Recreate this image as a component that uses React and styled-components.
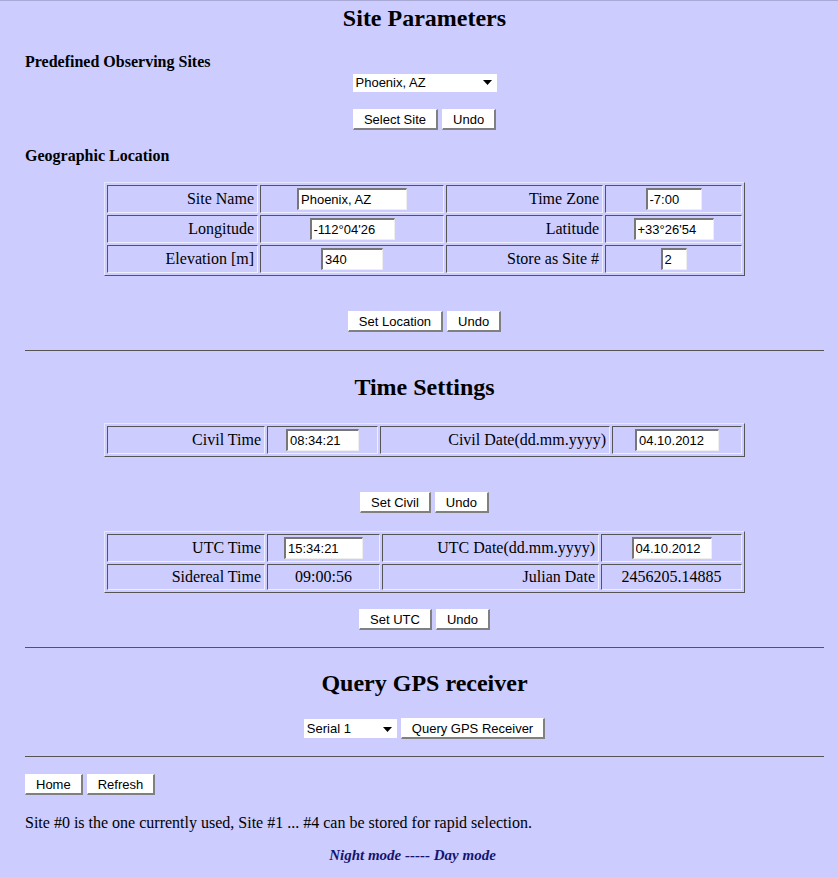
import React from "react";
import styled, { createGlobalStyle } from "styled-components";

const GlobalStyle = createGlobalStyle`
  * { box-sizing: border-box; }
  html, body {
    margin: 0;
    padding: 0;
    background: #ccccff;
  }
  body {
    font-family: "Liberation Serif", "Times New Roman", serif;
    color: #000;
  }
`;

const Page = styled.div`
  border-top: 1px solid #a9a9d6;
  padding: 0 14px 20px 25px;
`;

const Title = styled.h2`
  margin: ${p => p.$top}px 0 0;
  font-size: 24px;
  line-height: 28px;
  font-weight: bold;
  text-align: center;
`;

const SubHead = styled.h4`
  margin: ${p => p.$top}px 0 0;
  font-size: 16px;
  line-height: 18px;
  font-weight: bold;
`;

const Rule = styled.hr`
  margin: ${p => p.$top}px 0 0;
  border: none;
  border-top: 1px solid #555;
  height: 0;
`;

const Row = styled.div`
  display: flex;
  justify-content: ${p => (p.$left ? "flex-start" : "center")};
  align-items: center;
  gap: 4px;
  margin-top: ${p => p.$top}px;
`;

const Button = styled.button`
  height: 21px;
  padding: 0 10px;
  background: #fff;
  border-style: solid;
  border-width: 1px 2px 2px 1px;
  border-color: #fff #808080 #808080 #fff;
  border-radius: 0;
  font-family: "Liberation Sans", Arial, sans-serif;
  font-size: 13px;
  color: #000;
  line-height: 17px;
`;

const SelectWrap = styled.div`
  position: relative;
  display: inline-block;
  width: ${p => p.$w}px;
  height: ${p => p.$h}px;
`;

const Select = styled.select`
  appearance: none;
  width: 100%;
  height: 100%;
  border: none;
  border-radius: 0;
  background: #fff;
  padding: 0 18px 0 3px;
  font-family: "Liberation Sans", Arial, sans-serif;
  font-size: 13px;
  color: #000;
  outline: none;
`;

const Arrow = styled.svg`
  position: absolute;
  right: 5px;
  top: 50%;
  margin-top: -2px;
  pointer-events: none;
`;

function DropDown({ w, h, value, options }) {
  return (
    <SelectWrap $w={w} $h={h}>
      <Select defaultValue={value}>
        {options.map(o => (
          <option key={o}>{o}</option>
        ))}
      </Select>
      <Arrow width="9" height="5" viewBox="0 0 9 5">
        <polygon points="0,0 9,0 4.5,5" fill="#000" />
      </Arrow>
    </SelectWrap>
  );
}

const Table = styled.table`
  margin: ${p => p.$top}px auto 0;
  border-collapse: separate;
  border-spacing: 2px;
  table-layout: fixed;
  border-style: solid;
  border-width: 1px;
  border-color: #e6e6ff #555 #555 #e6e6ff;
`;

const Col = styled.col`
  width: ${p => p.$w}px;
`;

const Cell = styled.td`
  height: ${p => p.$h || 26}px;
  padding: 1px 3px;
  border-style: solid;
  border-width: 1px;
  border-color: #555 #eeeeff #eeeeff #555;
  text-align: ${p => p.$align || "center"};
  font-size: 16px;
  line-height: 18px;
  white-space: nowrap;
`;

const Input = styled.input`
  width: ${p => p.$w}px;
  height: 22px;
  padding: 0 2px;
  background: #fff;
  border-style: solid;
  border-width: 2px 1px 1px 2px;
  border-color: #777 #eee #eee #777;
  border-radius: 0;
  font-family: "Liberation Sans", Arial, sans-serif;
  font-size: 13px;
  color: #000;
  vertical-align: middle;
  outline: none;
`;

const Note = styled.p`
  margin: ${p => p.$top}px 0 0;
  font-size: 16px;
  line-height: 18px;
`;

const ModeLine = styled.p`
  margin: ${p => p.$top}px 0 0;
  padding-right: 24px;
  text-align: center;
  font-size: 15px;
  line-height: 17px;
  font-weight: bold;
  font-style: italic;
  color: #14146e;
`;

const ModeLink = styled.span`
  color: #14146e;
`;

function DataTable({ top, cols, rows }) {
  return (
    <Table $top={top}>
      <colgroup>
        {cols.map((w, i) => (
          <Col key={i} $w={w} />
        ))}
      </colgroup>
      <tbody>
        {rows.map((r, i) => (
          <tr key={i}>
            {r.map((c, j) => (
              <Cell key={j} $align={c.label ? "right" : "center"} $h={c.h}>
                {c.input ? <Input $w={c.w} defaultValue={c.input} /> : c.text}
              </Cell>
            ))}
          </tr>
        ))}
      </tbody>
    </Table>
  );
}

const locationRows = [
  [
    { label: true, text: "Site Name", h: 28 },
    { input: "Phoenix, AZ", w: 110 },
    { label: true, text: "Time Zone" },
    { input: "-7:00", w: 56 },
  ],
  [
    { label: true, text: "Longitude", h: 28 },
    { input: "-112°04'26", w: 85 },
    { label: true, text: "Latitude" },
    { input: "+33°26'54", w: 80 },
  ],
  [
    { label: true, text: "Elevation [m]", h: 28 },
    { input: "340", w: 62 },
    { label: true, text: "Store as Site #" },
    { input: "2", w: 26 },
  ],
];

const civilRows = [
  [
    { label: true, text: "Civil Time", h: 28 },
    { input: "08:34:21", w: 73 },
    { label: true, text: "Civil Date(dd.mm.yyyy)" },
    { input: "04.10.2012", w: 84 },
  ],
];

const utcRows = [
  [
    { label: true, text: "UTC Time", h: 28 },
    { input: "15:34:21", w: 79 },
    { label: true, text: "UTC Date(dd.mm.yyyy)" },
    { input: "04.10.2012", w: 80 },
  ],
  [
    { label: true, text: "Sidereal Time", h: 24 },
    { text: "09:00:56" },
    { label: true, text: "Julian Date" },
    { text: "2456205.14885" },
  ],
];

export default function App() {
  return (
    <>
      <GlobalStyle />
      <Page>
        <Title $top={3}>Site Parameters</Title>
        <SubHead $top={21}>Predefined Observing Sites</SubHead>
        <Row $top={2}>
          <DropDown
            w={144}
            h={18}
            value="Phoenix, AZ"
            options={["Phoenix, AZ", "Site #1", "Site #2", "Site #3", "Site #4"]}
          />
        </Row>
        <Row $top={18}>
          <Button>Select Site</Button>
          <Button>Undo</Button>
        </Row>
        <SubHead $top={17}>Geographic Location</SubHead>
        <DataTable top={17} cols={[151, 184, 157, 137]} rows={locationRows} />
        <Row $top={35}>
          <Button>Set Location</Button>
          <Button>Undo</Button>
        </Row>
        <Rule $top={18} />

        <Title $top={22}>Time Settings</Title>
        <DataTable top={22} cols={[158, 111, 230, 130]} rows={civilRows} />
        <Row $top={35}>
          <Button>Set Civil</Button>
          <Button>Undo</Button>
        </Row>
        <DataTable top={18} cols={[158, 113, 217, 141]} rows={utcRows} />
        <Row $top={16}>
          <Button>Set UTC</Button>
          <Button>Undo</Button>
        </Row>
        <Rule $top={17} />

        <Title $top={21}>Query GPS receiver</Title>
        <Row $top={21}>
          <DropDown w={93} h={19} value="Serial 1" options={["Serial 1", "Serial 2"]} />
          <Button>Query GPS Receiver</Button>
        </Row>
        <Rule $top={17} />

        <Row $left $top={17}>
          <Button>Home</Button>
          <Button>Refresh</Button>
        </Row>
        <Note $top={19}>
          Site #0 is the one currently used, Site #1 ... #4 can be stored for rapid selection.
        </Note>
        <ModeLine $top={15}>
          <ModeLink>Night mode</ModeLink> ----- <ModeLink>Day mode</ModeLink>
        </ModeLine>
      </Page>
    </>
  );
}
